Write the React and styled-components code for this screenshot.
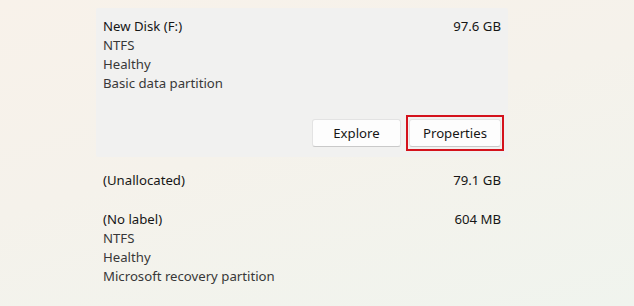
import React from "react";
import styled, { createGlobalStyle } from "styled-components";

const Global = createGlobalStyle`
  html, body { margin: 0; padding: 0; }
  body {
    width: 634px;
    height: 306px;
    overflow: hidden;
    font-family: "Noto Sans", "Open Sans", sans-serif;
  }
`;

const Page = styled.div`
  width: 634px;
  height: 306px;
  box-sizing: border-box;
  padding: 8px 0 0 96px;
  background: linear-gradient(165deg, #f8f2ea 0%, #f5f2eb 45%, #f0f4ee 100%);
`;

const List = styled.div`
  width: 412px;
  display: flex;
  flex-direction: column;
  gap: 8px;
`;

const Item = styled.div`
  box-sizing: border-box;
  padding: ${(p) => (p.$selected ? "9px 7px 6px 7px" : "6px 7px")};
  background: ${(p) => (p.$selected ? "#f1f1f0" : "transparent")};
  border-radius: 2px;
  display: flex;
  flex-direction: column;
`;

const Head = styled.div`
  display: flex;
  justify-content: space-between;
  align-items: baseline;
`;

const Line = styled.div`
  font-size: 13.2px;
  line-height: 19px;
  color: ${(p) => (p.$muted ? "#383838" : "#161616")};
  white-space: nowrap;
`;

const Actions = styled.div`
  display: flex;
  justify-content: flex-end;
  align-items: center;
  gap: 5px;
  margin-top: 22px;
`;

const Highlight = styled.div`
  display: flex;
  padding: 2px 1px;
  margin-right: -3px;
  border: 2px solid #d4121c;
`;

const Button = styled.button`
  box-sizing: border-box;
  width: ${(p) => p.$w}px;
  height: 28px;
  padding: 0;
  font-family: inherit;
  font-size: 13.2px;
  color: #161616;
  background: #fdfdfd;
  border: 1px solid #e3e3e3;
  border-bottom-color: #c9c9c9;
  border-radius: 3px;
`;

const data = [
  {
    name: "New Disk (F:)",
    size: "97.6 GB",
    details: ["NTFS", "Healthy", "Basic data partition"],
    selected: true,
  },
  { name: "(Unallocated)", size: "79.1 GB", details: [] },
  {
    name: "(No label)",
    size: "604 MB",
    details: ["NTFS", "Healthy", "Microsoft recovery partition"],
  },
];

export default function App() {
  return (
    <>
      <Global />
      <Page>
        <List>
          {data.map((d) => (
            <Item key={d.name} $selected={d.selected}>
              <Head>
                <Line>{d.name}</Line>
                <Line>{d.size}</Line>
              </Head>
              {d.details.map((t) => (
                <Line key={t} $muted>
                  {t}
                </Line>
              ))}
              {d.selected && (
                <Actions>
                  <Button $w={89}>Explore</Button>
                  <Highlight>
                    <Button $w={92}>Properties</Button>
                  </Highlight>
                </Actions>
              )}
            </Item>
          ))}
        </List>
      </Page>
    </>
  );
}
